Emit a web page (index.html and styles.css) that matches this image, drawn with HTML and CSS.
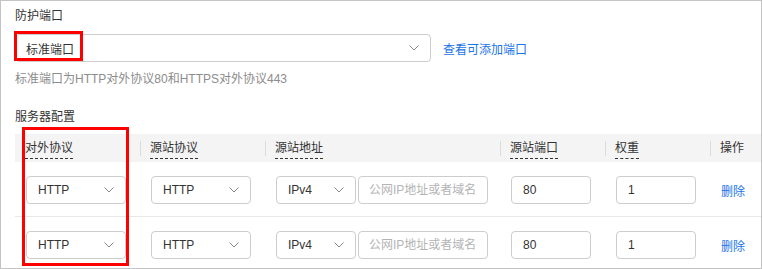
FILE: index.html
```html
<!DOCTYPE html>
<html lang="zh-CN">
<head>
    <meta charset="UTF-8">
    <meta name="viewport" content="width=device-width, initial-scale=1.0">
    <title>防护端口</title>
    <link rel="stylesheet" href="styles.css">
</head>
<body>
    <div class="panel">
        <div class="label">防护端口</div>
        <div class="port-line">
            <div class="select select-wide">
                <span>标准端口</span>
                <svg class="arrow" width="10" height="6" viewBox="0 0 10 6"><polyline points="0.5,0.5 5,5 9.5,0.5" fill="none" stroke="#888" stroke-width="1"/></svg>
            </div>
            <a class="link" href="#">查看可添加端口</a>
        </div>
        <div class="hint">标准端口为HTTP对外协议80和HTTPS对外协议443</div>

        <div class="label section">服务器配置</div>
        <div class="table">
            <div class="row head">
                <div class="cell"><span class="tip">对外协议</span></div>
                <div class="cell sep"><span class="tip">源站协议</span></div>
                <div class="cell sep"><span class="tip">源站地址</span></div>
                <div class="cell sep"><span class="tip">源站端口</span></div>
                <div class="cell sep"><span class="tip">权重</span></div>
                <div class="cell sep"><span>操作</span></div>
            </div>
            <div class="row body">
                <div class="cell">
                    <div class="select select-proto"><span>HTTP</span><svg class="arrow" width="10" height="6" viewBox="0 0 10 6"><polyline points="0.5,0.5 5,5 9.5,0.5" fill="none" stroke="#888" stroke-width="1"/></svg></div>
                </div>
                <div class="cell">
                    <div class="select select-proto"><span>HTTP</span><svg class="arrow" width="10" height="6" viewBox="0 0 10 6"><polyline points="0.5,0.5 5,5 9.5,0.5" fill="none" stroke="#888" stroke-width="1"/></svg></div>
                </div>
                <div class="cell addr">
                    <div class="select select-ip"><span>IPv4</span><svg class="arrow" width="10" height="6" viewBox="0 0 10 6"><polyline points="0.5,0.5 5,5 9.5,0.5" fill="none" stroke="#888" stroke-width="1"/></svg></div>
                    <div class="input input-addr placeholder">公网IP地址或者域名</div>
                </div>
                <div class="cell"><div class="input input-small">80</div></div>
                <div class="cell"><div class="input input-small">1</div></div>
                <div class="cell"><a class="link" href="#">删除</a></div>
            </div>
            <div class="row body">
                <div class="cell">
                    <div class="select select-proto"><span>HTTP</span><svg class="arrow" width="10" height="6" viewBox="0 0 10 6"><polyline points="0.5,0.5 5,5 9.5,0.5" fill="none" stroke="#888" stroke-width="1"/></svg></div>
                </div>
                <div class="cell">
                    <div class="select select-proto"><span>HTTP</span><svg class="arrow" width="10" height="6" viewBox="0 0 10 6"><polyline points="0.5,0.5 5,5 9.5,0.5" fill="none" stroke="#888" stroke-width="1"/></svg></div>
                </div>
                <div class="cell addr">
                    <div class="select select-ip"><span>IPv4</span><svg class="arrow" width="10" height="6" viewBox="0 0 10 6"><polyline points="0.5,0.5 5,5 9.5,0.5" fill="none" stroke="#888" stroke-width="1"/></svg></div>
                    <div class="input input-addr placeholder">公网IP地址或者域名</div>
                </div>
                <div class="cell"><div class="input input-small">80</div></div>
                <div class="cell"><div class="input input-small">1</div></div>
                <div class="cell"><a class="link" href="#">删除</a></div>
            </div>
        </div>

        <div class="mark mark-port"></div>
        <div class="mark mark-col"></div>
    </div>
</body>
</html>
```

FILE: styles.css
```css
*{
    box-sizing: border-box;
}
body{
    margin: 0;
    padding: 0;
    background: #fff;
    font-family: "Liberation Sans", "Noto Sans CJK SC", sans-serif;
    font-size: 12px;
    color: #333;
}
.panel{
    position: relative;
    width: 762px;
    height: 269px;
    border: 1px solid #c4c4c4;
    padding: 6px 0 0 14px;
    overflow: hidden;
}
.label{
    line-height: 18px;
    color: #333;
    margin-bottom: 9px;
}
.section{
    margin-top: 20px;
    margin-bottom: 8px;
}
.port-line{
    display: flex;
    align-items: center;
}
.select{
    display: flex;
    align-items: center;
    justify-content: space-between;
    height: 28px;
    border: 1px solid #cdcdcd;
    border-radius: 4px;
    padding: 0 11px 0 10px;
    background: #fff;
    color: #333;
}
.select-wide{
    width: 416px;
}
.arrow{
    display: block;
}
.link{
    color: #1a73e8;
    text-decoration: none;
    margin-left: 12px;
}
.hint{
    margin-top: 8px;
    line-height: 18px;
    color: #8c8c8c;
}
.table{
    width: 746px;
}
.row{
    display: grid;
    grid-template-columns: 125px 125px 235px 105px 105px 1fr;
}
.head{
    height: 28px;
    background: #f4f4f4;
}
.head .cell{
    position: relative;
    padding: 6px 0 0 10px;
    color: #333;
}
.head .cell span{
    display: inline-block;
    line-height: 16px;
}
.head .tip{
    padding-bottom: 2px;
    border-bottom: 1px dashed #333;
}
.head .sep::before{
    content: "";
    position: absolute;
    left: 0;
    top: 7px;
    width: 1px;
    height: 15px;
    background: #dcdcdc;
}
.body{
    border-bottom: 1px solid #e8e8e8;
}
.body .cell{
    padding: 14px 0 12px 11px;
    display: flex;
    align-items: center;
}
.body .link{
    margin-left: 0;
}
.select-proto{
    width: 100px;
    padding-left: 11px;
}
.select-ip{
    width: 80px;
    padding-left: 11px;
}
.input{
    height: 28px;
    line-height: 26px;
    border: 1px solid #cdcdcd;
    border-radius: 4px;
    padding-left: 11px;
    color: #333;
}
.input-addr{
    width: 130px;
    margin-left: 2px;
    padding-left: 10px;
}
.placeholder{
    color: #b4b4b4;
}
.input-small{
    width: 80px;
}
.mark{
    position: absolute;
    border: 3px solid #f00;
}
.mark-port{
    left: 13px;
    top: 30px;
    width: 69px;
    height: 30px;
}
.mark-col{
    left: 21px;
    top: 126px;
    width: 107px;
    height: 139px;
}
```
